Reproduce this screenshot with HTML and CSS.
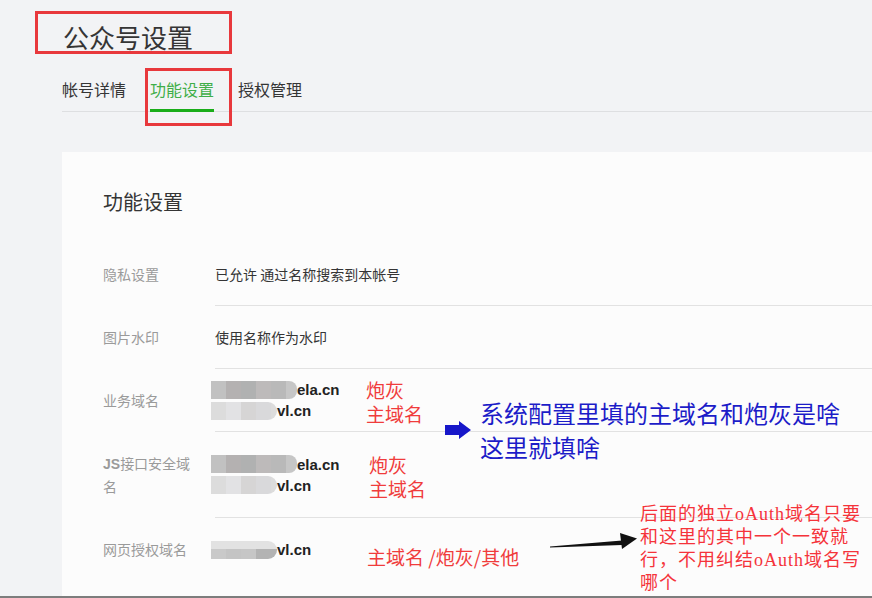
FILE: index.html
```html
<!DOCTYPE html>
<html lang="zh-CN">
<head>
  <meta charset="UTF-8">
  <meta name="viewport" content="width=device-width, initial-scale=1.0">
  <title>公众号设置</title>
  <link rel="stylesheet" href="styles.css">
</head>
<body>
  <div class="page">
    <h1 class="page-title">公众号设置</h1>

    <!-- Tabs -->
    <div class="tabs">
      <div class="tab">帐号详情</div>
      <div class="tab active">功能设置</div>
      <div class="tab">授权管理</div>
    </div>

    <div class="card">
      <h2 class="card-title">功能设置</h2>

      <div class="row">
        <div class="row-label">隐私设置</div>
        <div class="row-value">已允许 通过名称搜索到本帐号</div>
      </div>

      <div class="row">
        <div class="row-label">图片水印</div>
        <div class="row-value">使用名称作为水印</div>
      </div>

      <div class="row">
        <div class="row-label">业务域名</div>
        <div class="row-value">
          <div class="domains">
            <div class="domain"><span class="mask mask-long"></span>ela.cn</div>
            <div class="domain"><span class="mask mask-short"></span>vl.cn</div>
          </div>
          <div class="note">炮灰<br>主域名</div>
        </div>
      </div>

      <div class="row">
        <div class="row-label"><b>JS</b>接口安全域名</div>
        <div class="row-value">
          <div class="domains">
            <div class="domain"><span class="mask mask-long"></span>ela.cn</div>
            <div class="domain"><span class="mask mask-short"></span>vl.cn</div>
          </div>
          <div class="note note-shift">炮灰<br>主域名</div>
        </div>
      </div>

      <div class="row">
        <div class="row-label">网页授权域名</div>
        <div class="row-value">
          <div class="domains">
            <div class="domain"><span class="mask mask-short mask-dark"></span>vl.cn</div>
          </div>
          <div class="note note-low">主域名 /炮灰/其他</div>
        </div>
      </div>
    </div>

    <!-- Annotations drawn over the screenshot -->
    <div class="mark mark-title"></div>
    <div class="mark mark-tab"></div>

    <svg class="arrow-blue" width="26" height="18" viewBox="0 0 26 18">
      <polygon points="0,4 14,4 14,0 26,9 14,18 14,14 0,14" fill="#1717c9"/>
    </svg>
    <div class="blue-text">系统配置里填的主域名和炮灰是啥<br>这里就填啥</div>

    <svg class="arrow-black" width="92" height="24" viewBox="0 0 92 24">
      <polygon points="2,19.5 74,17 74,12.5 2,18.5" fill="#111"/>
      <polygon points="72,5 89,10.5 74,21" fill="#111"/>
    </svg>
    <div class="red-text">后面的独立oAuth域名只要<br>和这里的其中一个一致就<br>行，不用纠结oAuth域名写<br>哪个</div>
  </div>
</body>
</html>
```

FILE: styles.css
```css
* {
  margin: 0;
  padding: 0;
  box-sizing: border-box;
}

body {
  font-family: "Noto Sans CJK SC", "Liberation Sans", sans-serif;
  background-color: #f2f3f5;
  color: #353535;
  overflow: hidden;
}

.page {
  position: relative;
  height: 598px;
  padding-left: 62px;
  overflow: hidden;
  border-bottom: 2px solid #7d7d7d;
}

.page-title {
  font-size: 26px;
  font-weight: normal;
  line-height: 36px;
  padding-top: 19px;
  margin-left: 1px;
}

.tabs {
  display: flex;
  gap: 24px;
  margin-top: 23px;
  border-bottom: 1px solid #dedfe1;
}

.tab {
  font-size: 16px;
  line-height: 22px;
  padding-bottom: 11px;
  color: #353535;
}

.tab.active {
  color: #3fae48;
  border-bottom: 3px solid #1aad19;
  margin-bottom: -1px;
  padding-bottom: 9px;
}

.card {
  margin-top: 40px;
  background-color: #fcfcfc;
  padding: 36px 0 0 41px;
  height: 460px;
}

.card-title {
  font-size: 20px;
  font-weight: normal;
  line-height: 28px;
  margin-bottom: 27px;
}

.row {
  display: flex;
}

.row-label {
  width: 112px;
  padding: 20px 20px 21px 0;
  font-size: 14px;
  line-height: 22px;
  color: #9a9a9a;
}

.row-label b {
  font-family: "Liberation Sans", sans-serif;
  font-weight: bold;
}

.row-value {
  flex: 1;
  display: flex;
  align-items: center;
  font-size: 14px;
  border-bottom: 1px solid #e2e2e2;
}

.row:last-child .row-value {
  border-bottom: none;
}

.domains {
  width: 151px;
}

.domain {
  display: flex;
  align-items: center;
  height: 21px;
  font-family: "Liberation Sans", sans-serif;
  font-weight: bold;
  font-size: 15px;
  color: #222;
  margin-left: -4px;
}

.mask {
  display: inline-block;
  height: 18px;
}

.mask-long {
  width: 86px;
  background: linear-gradient(90deg, #c1c1c1 0 15px, #b4b1b1 15px 30px, #b0b1b1 30px 45px, #bdbaba 45px 60px, #b9b9b9 60px 75px, #c6c6c6 75px 86px);
  border-radius: 0 8px 8px 0;
}

.mask-short {
  width: 66px;
  background: linear-gradient(90deg, #dcdcdc 0 15px, #e2e2e4 15px 30px, #d6d5d5 30px 45px, #d9d9db 45px 60px, #dcdcdc 60px 66px);
  border-radius: 0 9px 9px 0;
}

.mask-dark {
  background: linear-gradient(180deg, #e2e2e2 0 8px, transparent 8px),
    linear-gradient(90deg, #c9c9c9 0 15px, #c4c4c4 15px 30px, #c6c6c6 30px 45px, #b3b3b3 45px 66px);
}

.note {
  font-size: 19px;
  line-height: 24px;
  color: #f03c3c;
  padding-top: 4px;
}

.note-shift {
  margin-left: 3px;
}

.note-low {
  padding-top: 14px;
  margin-left: 1px;
}

/* overlays */
.mark {
  position: absolute;
  border: 3px solid #e8383c;
}

.mark-title {
  left: 35px;
  top: 11px;
  width: 197px;
  height: 43px;
}

.mark-tab {
  left: 145px;
  top: 68px;
  width: 87px;
  height: 58px;
}

.arrow-blue {
  position: absolute;
  left: 445px;
  top: 421px;
}

.blue-text {
  position: absolute;
  left: 480px;
  top: 396px;
  font-size: 24px;
  line-height: 34px;
  color: #1c1cc8;
  white-space: nowrap;
}

.arrow-black {
  position: absolute;
  left: 548px;
  top: 528px;
}

.red-text {
  position: absolute;
  left: 640px;
  top: 503px;
  font-family: "Liberation Serif", "Noto Sans CJK SC", serif;
  font-size: 18px;
  letter-spacing: 1px;
  line-height: 23px;
  color: #f5333a;
  white-space: nowrap;
}
```
